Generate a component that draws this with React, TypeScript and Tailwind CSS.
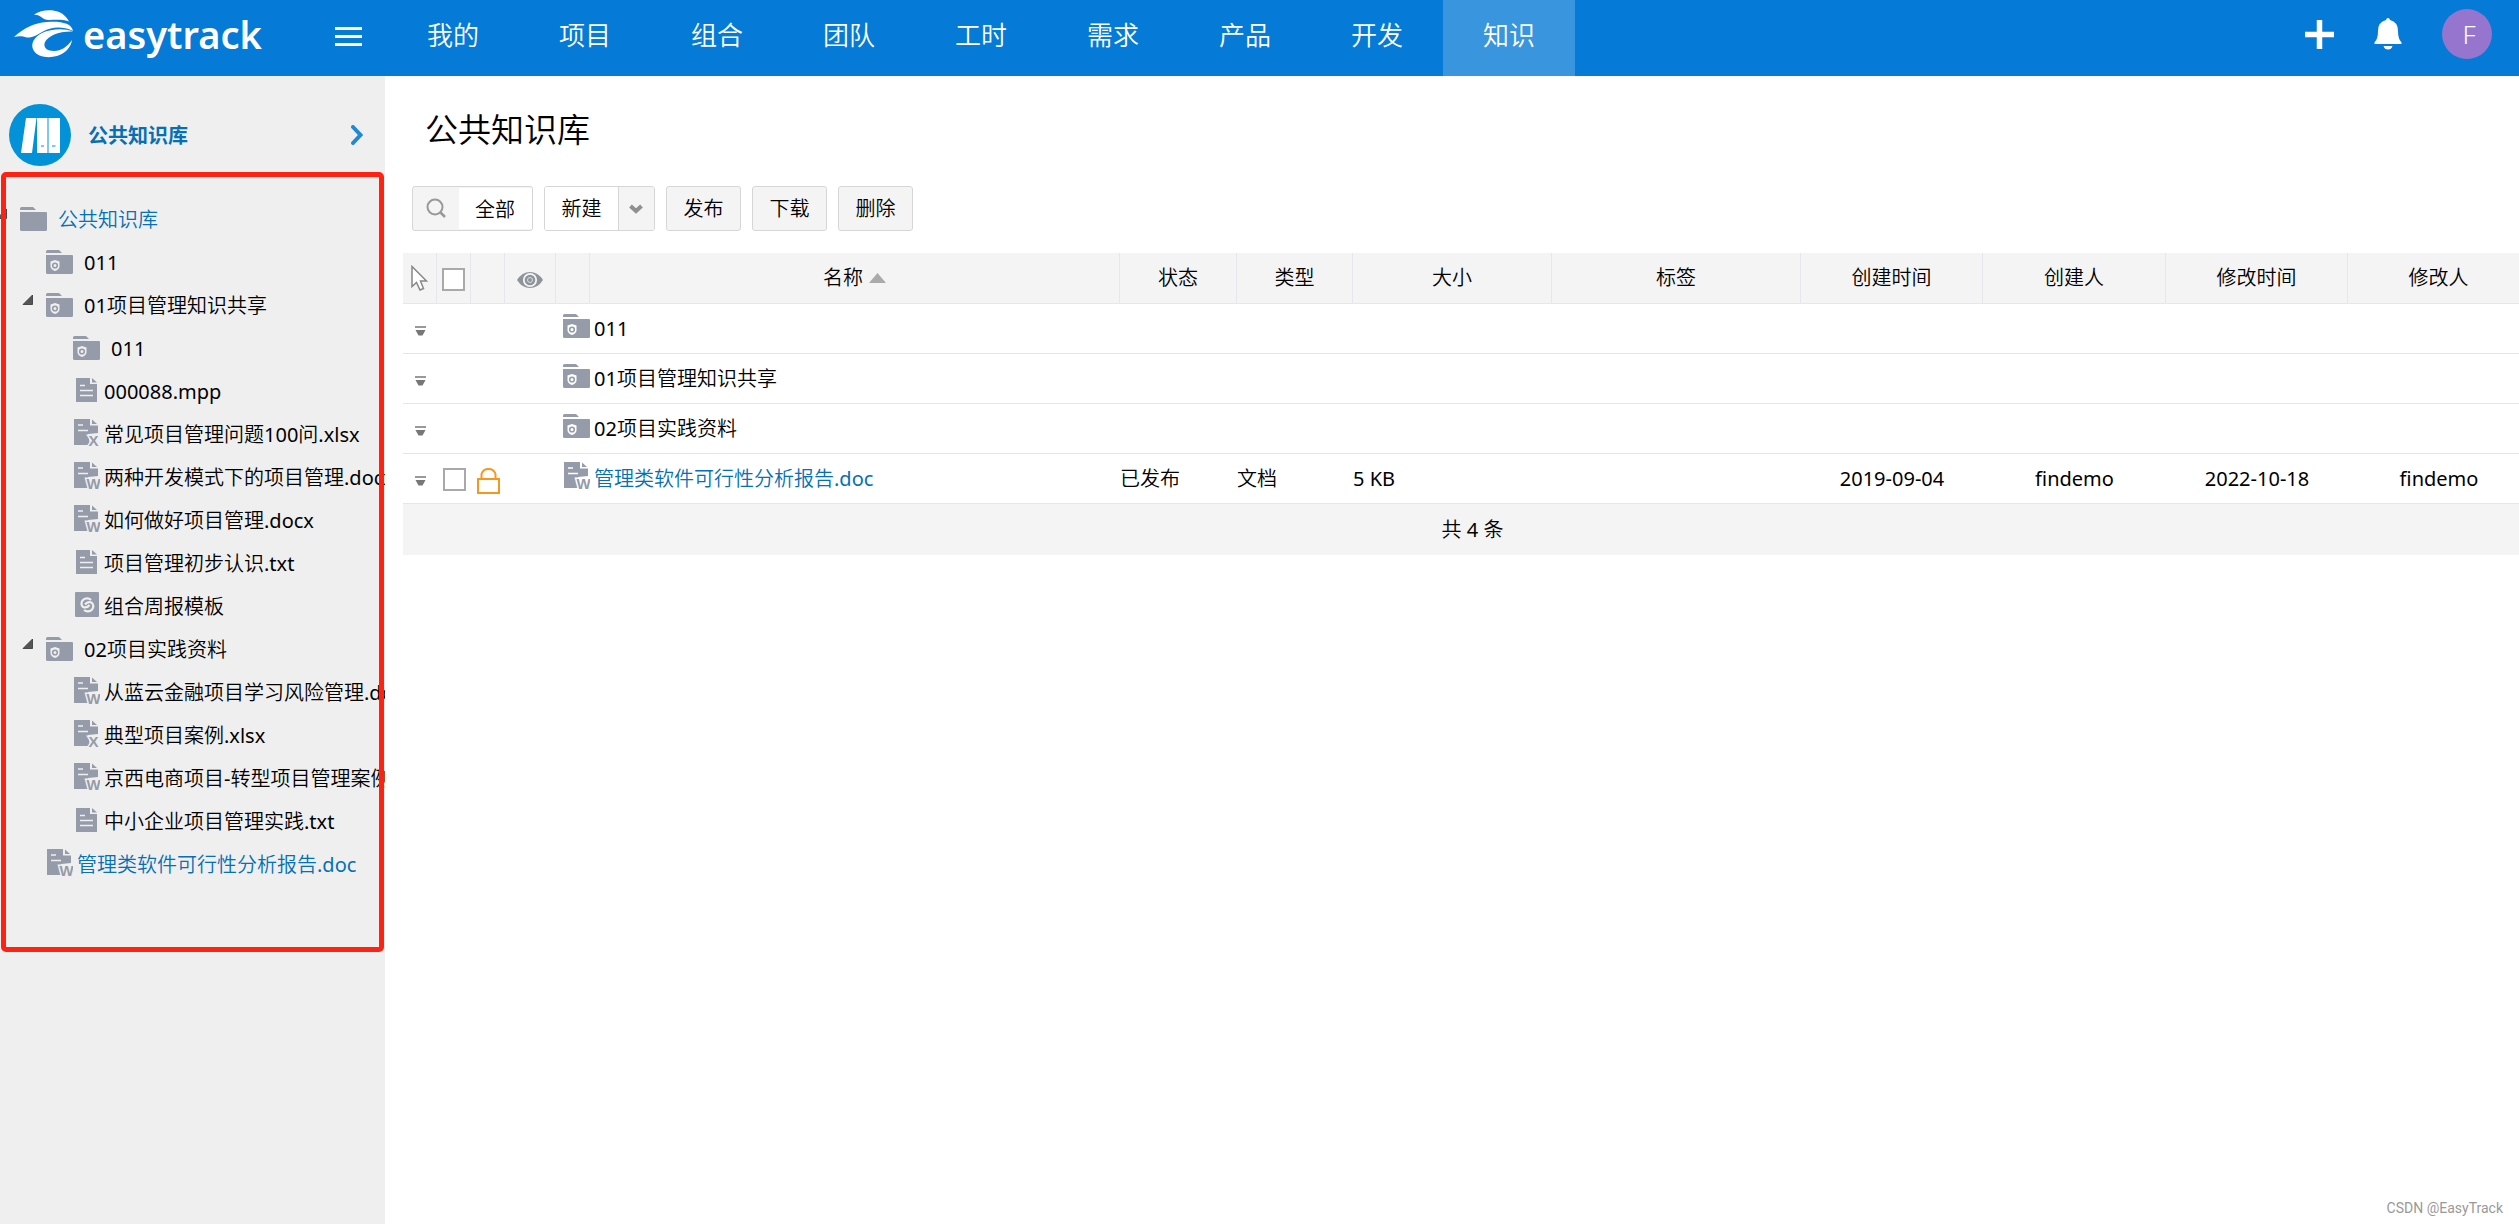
import { Fragment } from "react";
import type { ReactNode } from "react";

const GREY = "#959ba8";

const navItems = ["我的", "项目", "组合", "团队", "工时", "需求", "产品", "开发", "知识"];

type IconKind = "folder" | "shared" | "text" | "word" | "excel" | "link";

type TreeNode = {
  label: string;
  level: 0 | 1 | 2;
  icon: IconKind;
  open?: boolean;
  active?: boolean;
};

const tree: TreeNode[] = [
  { label: "公共知识库", level: 0, icon: "folder", open: true, active: true },
  { label: "011", level: 1, icon: "shared" },
  { label: "01项目管理知识共享", level: 1, icon: "shared", open: true },
  { label: "011", level: 2, icon: "shared" },
  { label: "000088.mpp", level: 2, icon: "text" },
  { label: "常见项目管理问题100问.xlsx", level: 2, icon: "excel" },
  { label: "两种开发模式下的项目管理.docx", level: 2, icon: "word" },
  { label: "如何做好项目管理.docx", level: 2, icon: "word" },
  { label: "项目管理初步认识.txt", level: 2, icon: "text" },
  { label: "组合周报模板", level: 2, icon: "link" },
  { label: "02项目实践资料", level: 1, icon: "shared", open: true },
  { label: "从蓝云金融项目学习风险管理.docx", level: 2, icon: "word" },
  { label: "典型项目案例.xlsx", level: 2, icon: "excel" },
  { label: "京西电商项目-转型项目管理案例.docx", level: 2, icon: "word" },
  { label: "中小企业项目管理实践.txt", level: 2, icon: "text" },
  { label: "管理类软件可行性分析报告.doc", level: 1, icon: "word", active: true },
];

const indent = { 0: "-ml-1", 1: "pl-[22px]", 2: "pl-[49px]" };

const rows = [
  { name: "011", icon: "shared" as IconKind },
  { name: "01项目管理知识共享", icon: "shared" as IconKind },
  { name: "02项目实践资料", icon: "shared" as IconKind },
  {
    name: "管理类软件可行性分析报告.doc",
    icon: "word" as IconKind,
    file: true,
    status: "已发布",
    type: "文档",
    size: "5 KB",
    created: "2019-09-04",
    creator: "findemo",
    modified: "2022-10-18",
    modifier: "findemo",
  },
];

const FolderIcon = ({ shared, bg }: { shared?: boolean; bg: string }) => (
  <svg width="27" height="24" viewBox="0 0 27 24" aria-hidden="true">
    <path d="M0 3V1.500Q0 0 1.500 0H13L16 3Z" fill={GREY} />
    <path d="M0 5H26Q27 5 27 6V22.500Q27 24 25.500 24H1.500Q0 24 0 22.500Z" fill={GREY} />
    {shared && (
      <>
        <path d="M9 10 13.500 11.500V16.500Q13 19.500 9 21Q5 19.500 4.500 16.500V11.500Z" fill={bg} />
        <circle cx="9" cy="15.500" r="2.300" fill={bg} stroke={GREY} strokeWidth="1.600" />
      </>
    )}
  </svg>
);

const TextIcon = ({ bg }: { bg: string }) => (
  <svg width="21" height="24" viewBox="0 0 21 24" aria-hidden="true">
    <path d="M0 0H14V6H21V24H0Z" fill={GREY} />
    <path d="M16 0 21 4.500H16Z" fill={GREY} />
    <path d="M4 7.500H9M4 12.500H17M4 17.500H17" stroke={bg} strokeWidth="1.600" />
  </svg>
);

const OfficeIcon = ({ letter, bg }: { letter: string; bg: string }) => (
  <svg width="26" height="27" viewBox="0 0 26 27" aria-hidden="true">
    <path d="M0 0H16V6.500H24V14L14 15L16 26H0Z" fill={GREY} />
    <path d="M18 0.500 23 5H18Z" fill={GREY} />
    <path d="M4 6H9M4 11.500H14" stroke={bg} strokeWidth="1.600" />
    <text
      x="19.500"
      y="26.500"
      textAnchor="middle"
      fontFamily="'Liberation Sans', sans-serif"
      fontWeight="700"
      fontSize="15"
      fill={GREY}
      stroke={bg}
      strokeWidth="3"
      paintOrder="stroke"
    >
      {letter}
    </text>
  </svg>
);

const LinkIcon = ({ bg }: { bg: string }) => (
  <svg width="24" height="25" viewBox="0 0 24 25" aria-hidden="true">
    <rect width="24" height="25" rx="1" fill={GREY} />
    <g fill="none" stroke={bg} strokeWidth="2.200">
      <path d="M16 8A5.500 5 0 1 0 8 15Q12 16.500 14.500 13" />
      <path d="M9 18A5.500 5 0 1 0 16.500 10.500Q12.500 9 10 12.500" />
    </g>
  </svg>
);

const FileIcon = ({ kind, bg }: { kind: IconKind; bg: string }) => {
  if (kind === "word") return <OfficeIcon letter="W" bg={bg} />;
  if (kind === "excel") return <OfficeIcon letter="X" bg={bg} />;
  if (kind === "text") return <TextIcon bg={bg} />;
  if (kind === "link") return <LinkIcon bg={bg} />;
  return <FolderIcon shared={kind === "shared"} bg={bg} />;
};

const Logo = () => (
  <a href="#home" className="flex items-center gap-2.5 text-white">
    <svg width="59" height="48" viewBox="0 0 59 48" fill="#fff" aria-hidden="true">
      <path d="M20 4.500C27 -0.500 38 -1 45 2C50 4 53 8 55 11.500C47 9 42 10 35 10C28 10 28 5 20 4.500Z" />
      <path d="M0 27C10 18 20 13 33 12C46 11 58 13 59 21C48 16 38 17 30 21C23 25 18 28 13 27.500C8 26 4 26 0 27Z" />
      <path d="M59 21.500C50 18 37 19 28 23C19 28 16 35 20 41C24 47 34 48.500 43 46C52 43 57 37 58 30C53 37 47 41 40 41C32 41 29 37 31 32C34 26 45 21 59 21.500Z" />
    </svg>
    <span className="font-['Noto_Sans','Open_Sans',sans-serif] text-[38px] leading-[44px] font-semibold">
      easytrack
    </span>
  </a>
);

const Header = () => (
  <header className="flex h-[76px] bg-[#057ad6] text-white">
    <div className="flex w-[387px] shrink-0 items-center justify-between pr-[25px] pb-2 pl-3.5">
      <Logo />
      <button type="button" aria-label="菜单" className="flex flex-col gap-[5px] pt-1">
        <span className="h-[3px] w-[27px] bg-white" />
        <span className="h-[3px] w-[27px] bg-white" />
        <span className="h-[3px] w-[27px] bg-white" />
      </button>
    </div>
    <nav className="flex">
      {navItems.map((item) => (
        <a
          key={item}
          href={`#${item}`}
          className={`flex w-[132px] items-center justify-center pb-1.5 text-[26px] ${
            item === "知识" ? "bg-[#3895de]" : ""
          }`}
        >
          {item}
        </a>
      ))}
    </nav>
    <div className="ml-auto flex items-center gap-10 pr-[27px] pb-2">
      <button type="button" aria-label="新增">
        <svg width="29" height="29" viewBox="0 0 29 29">
          <path d="M14.500 0V29M0 14.500H29" stroke="#fff" strokeWidth="5.500" />
        </svg>
      </button>
      <button type="button" aria-label="通知">
        <svg width="28" height="32" viewBox="0 0 28 32" fill="#fff">
          <path d="M14 0Q15.500 0 16 2Q24 4 24 13Q24 21 27.500 24.500V26H.5V24.500Q4 21 4 13Q4 4 12 2Q12.500 0 14 0Z" />
          <path d="M9.500 28H18.500Q17.500 31.500 14 31.500Q10.500 31.500 9.500 28Z" />
        </svg>
      </button>
      <button
        type="button"
        className="flex size-[50px] items-center justify-center rounded-full bg-[#9575cd] pl-1 text-[26px] font-light"
      >
        F
      </button>
    </div>
  </header>
);

const Sidebar = () => (
  <aside className="relative w-[385px] shrink-0 overflow-hidden bg-[#efefef]">
    <div className="flex items-center pt-7 pr-[22px] pl-[9px]">
      <svg width="62" height="62" viewBox="0 0 62 62" aria-hidden="true">
        <circle cx="31" cy="31" r="31" fill="#0391d7" />
        <path d="M17 14H27.500L23 49H12Z M28 14H38.500V49H28Z M39.500 14H51V49H39.500Z" fill="#fff" />
        <path d="M32 42H35M43 42H46.500" stroke="#0391d7" />
      </svg>
      <a
        href="#library"
        className="ml-[17px] font-['Noto_Sans_CJK_SC',sans-serif] text-xl font-bold text-[#0570b5]"
      >
        公共知识库
      </a>
      <button type="button" aria-label="展开" className="ml-auto">
        <svg width="12" height="20" viewBox="0 0 12 20">
          <path d="M2 2 9.500 10 2 18" fill="none" stroke="#2089d6" strokeWidth="4" strokeLinecap="round" />
        </svg>
      </button>
    </div>
    <ul className="pt-8">
      {tree.map((node, i) => {
        const isFolder = node.icon === "folder" || node.icon === "shared";
        return (
          <li key={i} className={`flex h-[43px] items-center ${indent[node.level]}`}>
            <span className="flex w-6 shrink-0 pb-3">
              {node.open && (
                <button type="button" aria-label="收起">
                  <svg width="12" height="10" viewBox="0 0 12 10">
                    <path d="M10.500 0V9.500H1Z" fill="#555" stroke="#333" strokeWidth="0.800" />
                  </svg>
                </button>
              )}
            </span>
            <span
              className={`flex w-[27px] shrink-0 justify-center ${isFolder ? "mr-[11px] pb-0.5" : "mr-1 pb-1"}`}
            >
              <FileIcon kind={node.icon} bg="#efefef" />
            </span>
            <a
              href={`#node-${i}`}
              className={`text-xl whitespace-nowrap ${node.active ? "text-[#0570b5]" : "text-black"}`}
            >
              {node.label}
            </a>
          </li>
        );
      })}
    </ul>
    {/* highlighted area */}
    <div className="pointer-events-none absolute top-24 right-px left-px h-[780px] rounded-[5px] border-[5px] border-[#ff2112]" />
  </aside>
);

const ToolButton = ({ children }: { children: ReactNode }) => (
  <button
    type="button"
    className="h-[45px] w-[75px] rounded-[3px] border border-[#d6d6d6] bg-[#f4f4f4] text-xl"
  >
    {children}
  </button>
);

const Toolbar = () => (
  <div className="mt-8 ml-[27px] flex gap-[11px]">
    <div className="flex h-[45px] w-[121px] items-center rounded-[3px] border border-[#d6d6d6] bg-[#f4f4f4]">
      <label htmlFor="filter" aria-label="筛选" className="flex w-[46px] shrink-0 justify-center pb-0.5">
        <svg width="20" height="20" viewBox="0 0 20 20" fill="none" stroke="#999">
          <circle cx="9" cy="9" r="7.500" strokeWidth="2" />
          <path d="M14.500 14.500 19 19" strokeWidth="2.500" />
        </svg>
      </label>
      <input
        id="filter"
        defaultValue="全部"
        className="h-[41px] w-full min-w-0 bg-white pl-4 text-xl outline-none"
      />
    </div>
    <div className="flex h-[45px] overflow-hidden rounded-[3px] border border-[#d6d6d6]">
      <button type="button" className="w-[73px] bg-white text-xl">
        新建
      </button>
      <button
        type="button"
        aria-label="更多"
        className="flex w-9 items-center justify-center border-l border-[#d6d6d6] bg-[#f4f4f4] pr-0.5"
      >
        <svg width="14" height="10" viewBox="0 0 14 10">
          <path d="M1.500 2 7 7 12.500 2" fill="none" stroke="#8f8f8f" strokeWidth="4" />
        </svg>
      </button>
    </div>
    <ToolButton>发布</ToolButton>
    <ToolButton>下载</ToolButton>
    <ToolButton>删除</ToolButton>
  </div>
);

const Check = ({ label }: { label: string }) => (
  <input
    type="checkbox"
    aria-label={label}
    className="mx-auto mt-0.5 block size-[23px] appearance-none border-2 border-[#a9a9a9] bg-white"
  />
);

const LockIcon = () => (
  <svg
    width="23"
    height="26"
    viewBox="0 0 23 26"
    fill="none"
    stroke="#f8971d"
    strokeWidth="2"
    className="mx-auto mt-1"
  >
    <path d="M1 11H22V25H1Z" />
    <path d="M4.500 11V6Q6 1 11.500 1Q17 1 18.500 6V11" />
  </svg>
);

const RowMenu = () => (
  <button type="button" aria-label="操作" className="mx-auto block pt-1.5">
    <svg width="11" height="11" viewBox="0 0 11 11">
      <path d="M0 1H11" stroke="#777" strokeWidth="1.500" />
      <path d="M0.500 4H10.500L7.500 9.500H3.500Z" fill="#777" />
    </svg>
  </button>
);

const th = "h-[51px] border-r border-b border-[#e6e6ee] p-0 font-normal";

const FileTable = () => (
  <div className="mt-[22px] ml-[18px] overflow-hidden">
    <table className="w-[calc(100%+23px)] table-fixed border-separate border-spacing-0 text-xl">
      <colgroup>
        <col className="w-[34px]" />
        <col className="w-[34px]" />
        <col className="w-[34px]" />
        <col className="w-[51px]" />
        <col className="w-[34px]" />
        <col />
        <col className="w-[117px]" />
        <col className="w-[116px]" />
        <col className="w-[199px]" />
        <col className="w-[249px]" />
        <col className="w-[182px]" />
        <col className="w-[183px]" />
        <col className="w-[182px]" />
        <col className="w-[194px]" />
      </colgroup>
      <thead className="bg-[#f4f4f4]">
        <tr>
          <th className={th}>
            <svg
              width="17"
              height="26"
              viewBox="0 0 17 26"
              fill="#fff"
              stroke="#888"
              strokeWidth="1.500"
              className="mx-auto"
            >
              <path d="M1 1.500V21.500L5.500 17.500L9 25L12.500 23.500L9.500 16H15.500Z" />
            </svg>
          </th>
          <th className={th}>
            <Check label="全选" />
          </th>
          <th className={th} />
          <th className={th}>
            <svg width="26" height="16" viewBox="0 0 26 16" className="mx-auto mt-1">
              <path d="M0 8Q5 0 13 0Q21 0 26 8Q21 16 13 16Q5 16 0 8Z" fill="#8f949c" />
              <circle cx="13" cy="8" r="6.200" fill="#8f949c" stroke="#f4f4f4" strokeWidth="1.800" />
              <circle cx="13" cy="8" r="2.500" fill="#8f949c" stroke="#dcdcdc" strokeWidth="1" />
            </svg>
          </th>
          <th className={th} />
          <th className={th}>
            <button type="button" className="inline-flex items-center gap-1.5">
              名称
              <svg width="17" height="10" viewBox="0 0 17 10">
                <path d="M8.500 0 17 10H0Z" fill="#aaa" />
              </svg>
            </button>
          </th>
          <th className={th}>状态</th>
          <th className={th}>类型</th>
          <th className={th}>大小</th>
          <th className={th}>标签</th>
          <th className={th}>创建时间</th>
          <th className={th}>创建人</th>
          <th className={th}>修改时间</th>
          <th className={th}>
            <span className="pr-3">修改人</span>
          </th>
        </tr>
      </thead>
      <tbody className="[&_td]:h-[50px] [&_td]:border-b [&_td]:border-[#e6e6ea] [&_td]:p-0">
        {rows.map((row) => (
          <tr key={row.name}>
            <td>
              <RowMenu />
            </td>
            <td>{row.file && <Check label={row.name} />}</td>
            <td>{row.file && <LockIcon />}</td>
            <td />
            <td>
              <span className="flex justify-end pb-1.5">
                <FileIcon kind={row.icon} bg="#fff" />
              </span>
            </td>
            <td>
              <a href="#file" className={`pl-1 ${row.file ? "text-[#0570b5]" : "text-black"}`}>
                {row.name}
              </a>
            </td>
            {row.file ? (
              <Fragment>
                <td>{row.status}</td>
                <td>{row.type}</td>
                <td>{row.size}</td>
                <td />
                <td className="text-center">{row.created}</td>
                <td className="text-center">{row.creator}</td>
                <td className="text-center">{row.modified}</td>
                <td className="text-center">
                  <span className="pr-3">{row.modifier}</span>
                </td>
              </Fragment>
            ) : (
              <td colSpan={8} />
            )}
          </tr>
        ))}
      </tbody>
      <tfoot className="bg-[#f4f4f4]">
        <tr>
          <td colSpan={14} className="h-[51px] p-0 text-center">
            共 4 条
          </td>
        </tr>
      </tfoot>
    </table>
  </div>
);

export default function App() {
  return (
    <div className="flex min-h-screen flex-col bg-white font-['Noto_Sans','Noto_Sans_CJK_SC_DemiLight','Noto_Sans_CJK_SC',sans-serif] font-normal text-black">
      <Header />
      <div className="flex flex-1">
        <Sidebar />
        <main className="flex min-w-0 flex-1 flex-col">
          <h1 className="mt-[30px] ml-10 text-[33px] leading-[48px]">公共知识库</h1>
          <Toolbar />
          <FileTable />
          <p className="mt-auto pr-4 pb-1.5 text-right font-['Roboto',sans-serif] text-sm text-[#999]">
            CSDN @EasyTrack
          </p>
        </main>
      </div>
    </div>
  );
}
